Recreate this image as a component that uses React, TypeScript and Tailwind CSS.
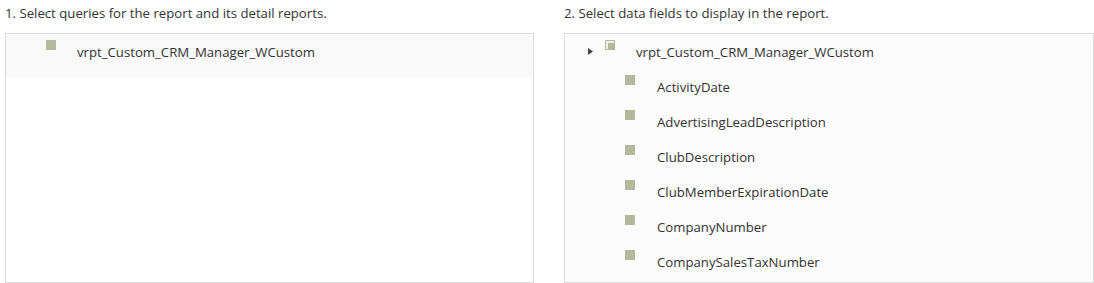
import React from "react";

const font = { fontFamily: '"Open Sans", "Noto Sans", sans-serif' };

function Box() {
  return <div className="w-[10px] h-[10px] bg-[#b3b99c] shrink-0" />;
}

function PartialBox() {
  return (
    <div className="w-[10px] h-[10px] bg-[#b3b99c] shrink-0 relative">
      <div className="absolute left-[1px] top-[1px] w-[8px] h-[8px] bg-[#eef0e8]" />
      <div className="absolute left-[3px] top-[3px] w-[6px] h-[6px] bg-[#b3b99c]" />
    </div>
  );
}

const fields = [
  "ActivityDate",
  "AdvertisingLeadDescription",
  "ClubDescription",
  "ClubMemberExpirationDate",
  "CompanyNumber",
  "CompanySalesTaxNumber",
];

export default function App() {
  return (
    <div className="w-[1094px] h-[283px] bg-white text-[#333] text-[13.2px] flex pl-[5px] gap-[30px]" style={font}>
      <div className="w-[529px] flex flex-col">
        <div className="h-[33px] leading-[27px]">1. Select queries for the report and its detail reports.</div>
        <div className="flex-1 border border-[#dcdcdc] bg-white">
          <div className="h-[44px] bg-[#f9f9f9] flex items-start pl-[40px]">
            <div className="mt-[6px]"><Box /></div>
            <span className="ml-[21px] leading-[36px]">vrpt_Custom_CRM_Manager_WCustom</span>
          </div>
        </div>
      </div>
      <div className="w-[530px] flex flex-col">
        <div className="h-[33px] leading-[27px]">2. Select data fields to display in the report.</div>
        <div className="flex-1 border border-[#dcdcdc] bg-[#fcfcfc]">
          <div className="h-[35px] flex items-start pl-[23px]">
            <svg width="5" height="7" viewBox="0 0 5 7" className="mt-[14px] shrink-0">
              <path d="M0 0 L5 3.5 L0 7 Z" fill="#444" />
            </svg>
            <div className="ml-[12px] mt-[6px]"><PartialBox /></div>
            <span className="ml-[21px] leading-[36px]">vrpt_Custom_CRM_Manager_WCustom</span>
          </div>
          {fields.map((f) => (
            <div key={f} className="h-[35px] flex items-start pl-[60px]">
              <div className="mt-[6px]"><Box /></div>
              <span className="ml-[22px] leading-[36px]">{f}</span>
            </div>
          ))}
        </div>
      </div>
    </div>
  );
}
